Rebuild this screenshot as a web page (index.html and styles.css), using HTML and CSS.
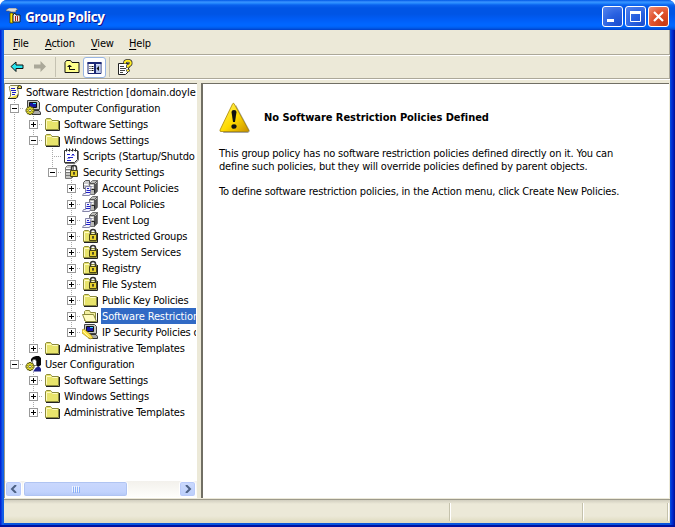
FILE: index.html
```html
<!DOCTYPE html>
<html lang="en">
<head>
<meta charset="utf-8">
<title>Group Policy</title>
<link rel="stylesheet" href="styles.css">
</head>
<body>
<svg class="defs" aria-hidden="true">
  <defs>
    <linearGradient id="gold" x1="0" y1="0" x2="1" y2="1"><stop offset="0" stop-color="#fff36b"/><stop offset=".55" stop-color="#ffda00"/><stop offset="1" stop-color="#c98f00"/></linearGradient>
  </defs>
  <symbol id="folder" viewBox="0 0 16 16">
    <path d="M1.500 13.500V3.500l1-1h4l1 1v1h7v9z" fill="#e8e46c" stroke="#8c8b3c"/>
    <path d="M2.500 12.500v-8h5l1 1h5" fill="none" stroke="#fffbc0"/>
    <path d="M2 14.500h13.500V5" fill="none" stroke="#222"/>
  </symbol>
  <symbol id="open" viewBox="0 0 16 16">
    <path d="M2.500 12.500v-9l1-1h4l1 2h5v9z" fill="#f3efa0" stroke="#8c8b3c"/>
    <path d="M.5 6.500h11l3 7h-11z" fill="#fffbc0" stroke="#8c8b3c"/>
    <path d="M3 14.500h12.500V5" fill="none" stroke="#222"/>
  </symbol>
  <symbol id="padlock" viewBox="0 0 16 16">
    <path d="M8.500 8V4q0-2.500 2.500-2.500T13.500 4v4" fill="none" stroke="#333" stroke-width="1.500"/>
    <path d="M7.500 6.500h7v6h-7z" fill="#e8d32f" stroke="#4b4711"/>
    <path d="M11 8v3M10 9h2" stroke="#222"/>
  </symbol>
  <symbol id="lockfolder" viewBox="0 0 16 16"><use href="#folder"/><use href="#padlock"/></symbol>
  <symbol id="server" viewBox="0 0 16 16">
    <path d="M7.500 3.500l3-3h5v11l-3 3h-5z" fill="#bcbcb8" stroke="#777"/>
    <path d="M7.500 3.500h5v11M12.500 3.500l3-3" fill="none" stroke="#555"/>
    <path d="M13.500 4v9M14.500 3v9" stroke="#555"/>
    <path d="M8.500 5.500h3M8.500 7.500h3" stroke="#fff"/>
    <path d="M3.500 6.500h6l-1 2v5l-1 2h-7l1-2h2z" fill="#f2f2ff" stroke="#8585a8"/>
    <path d="M5 8.500h2M4.500 10.500h4M4 12.500h4" stroke="#2020c8"/><path d="M9.500 9.500h3v3" fill="none" stroke="#222"/>
  </symbol>
  <symbol id="accounts" viewBox="0 0 16 16">
    <path d="M1.500 2.500l2-2h4v8h-6z" fill="#ccc" stroke="#555"/><path d="M2 4.500h4" stroke="#fff"/>
    <use href="#server"/>
  </symbol>
  <symbol id="security" viewBox="0 0 16 16">
    <path d="M2.500 3.500l2-2h6v11l-2 2h-6z" fill="#c8c8c4" stroke="#777"/>
    <path d="M3 5.500h5M3 8.500h5M3 11.500h5M8.500 4v10" stroke="#777"/><path d="M3 4.500h5M3 7.500h5" stroke="#fff"/>
    <use href="#padlock"/>
  </symbol>
  <symbol id="scripts" viewBox="0 0 16 16">
    <path d="M1.500 2.500h13v9l-3 3h-10z" fill="#fff" stroke="#333"/>
    <path d="M2 15.500h10l3.500-3.500V3" fill="none" stroke="#777"/>
    <path d="M3.500.5v3M6.500.5v3M9.500.5v3M12.500.5v3" stroke="#222"/><path d="M4.500 1v2M7.500 1v2M10.500 1v2" stroke="#aaa"/>
    <path d="M4 6.500h3M9 6.500h2M5 9.500h5M4 12.500h4" stroke="#1e1ec8"/><path d="M8 7.500h4M4 10.500h3" stroke="#9a9ae8"/>
  </symbol>
  <symbol id="scroll" viewBox="0 0 16 16">
    <path d="M3.500 1.500h9q-2 1-2 3l1 4q0 4-3 6h-7q3-2 2-6l-1-4q-1-2 1-3z" fill="#fffde2" stroke="#88854c"/>
    <path d="M12.500 1.500q3 0 2 3h-4q0-3 2-3M1 14.500h8q2-1 2-4" fill="#ecd946" stroke="#222"/>
    <path d="M4 4.500h4M4 6.500h5M5 8.500h4M5 10.500h3" stroke="#1e1ec8"/>
  </symbol>
  <symbol id="computer" viewBox="0 0 16 16">
    <path d="M2.500.5h10l2 2v7h-12z" fill="#c8c8c4" stroke="#444"/>
    <path d="M4.500 2.500h7v5h-7z" fill="#1717a6" stroke="#111"/><path d="M8 3.500h3" stroke="#3fd8ff"/>
    <path d="M6 10.500h8l1.500 2v2H7z" fill="#aaa" stroke="#333"/>
  </symbol>
  <symbol id="gear" viewBox="0 0 16 16">
    <path d="M5 6v9M.500 10.500h9M2 7.500l6 6M8 7.500l-6 6" stroke="#5e5a10" stroke-width="2.600"/>
    <path d="M5 7v7M1.500 10.500h7M2.500 8l5 5M7.500 8l-5 5" stroke="#e5dd32" stroke-width="1.700"/>
    <circle cx="5" cy="10.500" r="1.300" fill="#fff" stroke="#4c480d" stroke-width=".7"/>
  </symbol>
  <symbol id="compconf" viewBox="0 0 16 16"><use href="#computer"/><use href="#gear"/></symbol>
  <symbol id="ipsec" viewBox="0 0 16 16"><use href="#computer"/><path d="M0 6l2-1 7 6 2 3-3 1-8-6z" fill="#ffe34a" stroke="#a48b15" stroke-width=".7"/><path d="M1 7l6 6" stroke="#fff7a0"/></symbol>
  <symbol id="userconf" viewBox="0 0 16 16">
    <path d="M6 6V3l2-2 3-1h3l2 2v7l-3 2-2-2V5L9 3z" fill="#080808"/>
    <path d="M8 3.500h2.500l1 2v4H8.500l-1-3z" fill="#fff" stroke="#444" stroke-width=".7"/>
    <path d="M8 15.500l3-4 3-1 2 2v3z" fill="#1d208c"/><use href="#gear"/>
  </symbol>
</svg>

<div class="window">
  <header class="titlebar">
    <svg class="appicon" viewBox="0 0 16 16"><path d="M0 2l3-2h7l2 2h-2v2H5L3 3H0z" fill="#ddd" stroke="#555" stroke-width=".6"/><path d="M4 5h3v10H4z" fill="#ffe400" stroke="#4a4300" stroke-width=".8"/><path d="M7 14V7l2-2 1 2h4v7z" fill="#eee" stroke="#222"/><path d="M9.500 8v5M11.500 8v5" stroke="#b01818"/></svg>
    <h1 class="title">Group Policy</h1>
    <div class="controls">
      <span class="ctl"><svg viewBox="0 0 19 19"><path d="M4 12h7v3H4z" fill="#fff"/></svg></span>
      <span class="ctl"><svg viewBox="0 0 19 19"><path d="M4.500 5.500h10v9h-10z" fill="none" stroke="#fff"/><path d="M4 5.500h11" stroke="#fff" stroke-width="3"/></svg></span>
      <span class="ctl close"><svg viewBox="0 0 19 19"><path d="M5 5l9 9M14 5l-9 9" stroke="#fff" stroke-width="2.200"/></svg></span>
    </div>
  </header>
  <nav class="menubar"><span class="m-file"><u>F</u>ile</span><span class="m-action"><u>A</u>ction</span><span class="m-view"><u>V</u>iew</span><span class="m-help"><u>H</u>elp</span></nav>
  <div class="toolbar">
    <svg class="back" viewBox="0 0 14 12"><path d="M1 5.500L6 1v3h7v3.500H6v3z" fill="#27e5ee" stroke="#111"/></svg>
    <svg class="fwd" viewBox="0 0 14 12"><path d="M13 5.500L7.500 0v3.500H1v4h6.500V11z" fill="#aaa899"/></svg>
    <i class="sep"></i>
    <svg class="up" viewBox="0 0 16 14"><path d="M1 12.500V2.500l1.500-2h4l1.500 2h7v10z" fill="#ffff8c" stroke="#111"/><path d="M5.500 5v4.500H11M3.500 6.500h4M4.500 5.500h2" fill="none" stroke="#111"/></svg>
    <span class="toggle"><svg viewBox="0 0 14 12"><path d="M.5.500h13v11H.500z" fill="#fff" stroke="#1b2875"/><path d="M0 1h14M7.500 1v10" stroke="#1b2875" stroke-width="2"/><path d="M8.500 2.500H13v8.500H8.500z" fill="#b9c8ed"/><path d="M2 4.500h1M4 4.500h2M2 6.500h1M4 6.500h2M2 8.500h1M4 8.500h2" stroke="#111"/><path d="M11.500 4v5L9 6.500z" fill="#111"/></svg></span>
    <i class="sep"></i>
    <svg class="prop" viewBox="0 0 16 16"><path d="M1.500 4.500h10v8l-3 3h-7z" fill="#fff" stroke="#222"/><path d="M3 7.500h4M3 9.500h6M3 11.500h5M3 13.500h3" stroke="#444"/><path d="M8 5V3.500Q8 1.800 11 1.800t2.700 2.500q0 1.700-2.700 2.700v2M11 10.500v2" fill="none" stroke="#333" stroke-width="3.600"/><path d="M8 4.500v-1Q8 1.800 11 1.800t2.700 2.500q0 1.700-2.700 2.700v1.500M11 10.800v1.400" fill="none" stroke="#ffec24" stroke-width="2"/></svg>
  </div>

  <main class="panes">
    <section class="treepane">
      <div class="tree">
        <div class="row"><svg class="ico root"><use href="#scroll"/></svg><span class="rootname">Software Restriction [domain.doyle</span></div>
        <div class="row"><i class="g t"><b class="minus"></b></i><svg class="ico"><use href="#compconf"/></svg><span>Computer Configuration</span></div>
        <div class="row"><i class="g v"></i><i class="g t"><b class="plus"></b></i><svg class="ico"><use href="#folder"/></svg><span>Software Settings</span></div>
        <div class="row"><i class="g v"></i><i class="g t"><b class="minus"></b></i><svg class="ico"><use href="#folder"/></svg><span>Windows Settings</span></div>
        <div class="row"><i class="g v"></i><i class="g v"></i><i class="g t"></i><svg class="ico"><use href="#scripts"/></svg><span>Scripts (Startup/Shutdo</span></div>
        <div class="row"><i class="g v"></i><i class="g v"></i><i class="g l"><b class="minus"></b></i><svg class="ico"><use href="#security"/></svg><span>Security Settings</span></div>
        <div class="row"><i class="g v"></i><i class="g v"></i><i class="g"></i><i class="g t"><b class="plus"></b></i><svg class="ico"><use href="#accounts"/></svg><span>Account Policies</span></div>
        <div class="row"><i class="g v"></i><i class="g v"></i><i class="g"></i><i class="g t"><b class="plus"></b></i><svg class="ico"><use href="#server"/></svg><span>Local Policies</span></div>
        <div class="row"><i class="g v"></i><i class="g v"></i><i class="g"></i><i class="g t"><b class="plus"></b></i><svg class="ico"><use href="#server"/></svg><span>Event Log</span></div>
        <div class="row"><i class="g v"></i><i class="g v"></i><i class="g"></i><i class="g t"><b class="plus"></b></i><svg class="ico"><use href="#lockfolder"/></svg><span>Restricted Groups</span></div>
        <div class="row"><i class="g v"></i><i class="g v"></i><i class="g"></i><i class="g t"><b class="plus"></b></i><svg class="ico"><use href="#lockfolder"/></svg><span>System Services</span></div>
        <div class="row"><i class="g v"></i><i class="g v"></i><i class="g"></i><i class="g t"><b class="plus"></b></i><svg class="ico"><use href="#lockfolder"/></svg><span>Registry</span></div>
        <div class="row"><i class="g v"></i><i class="g v"></i><i class="g"></i><i class="g t"><b class="plus"></b></i><svg class="ico"><use href="#lockfolder"/></svg><span>File System</span></div>
        <div class="row"><i class="g v"></i><i class="g v"></i><i class="g"></i><i class="g t"><b class="plus"></b></i><svg class="ico"><use href="#folder"/></svg><span>Public Key Policies</span></div>
        <div class="row"><i class="g v"></i><i class="g v"></i><i class="g"></i><i class="g t"><b class="plus"></b></i><svg class="ico"><use href="#open"/></svg><span class="selected">Software Restriction</span></div>
        <div class="row"><i class="g v"></i><i class="g v"></i><i class="g"></i><i class="g l"><b class="plus"></b></i><svg class="ico"><use href="#ipsec"/></svg><span>IP Security Policies o</span></div>
        <div class="row"><i class="g v"></i><i class="g l"><b class="plus"></b></i><svg class="ico"><use href="#folder"/></svg><span>Administrative Templates</span></div>
        <div class="row"><i class="g l"><b class="minus"></b></i><svg class="ico"><use href="#userconf"/></svg><span>User Configuration</span></div>
        <div class="row"><i class="g"></i><i class="g t"><b class="plus"></b></i><svg class="ico"><use href="#folder"/></svg><span>Software Settings</span></div>
        <div class="row"><i class="g"></i><i class="g t"><b class="plus"></b></i><svg class="ico"><use href="#folder"/></svg><span>Windows Settings</span></div>
        <div class="row"><i class="g"></i><i class="g l"><b class="plus"></b></i><svg class="ico"><use href="#folder"/></svg><span>Administrative Templates</span></div>
      </div>
      <div class="scrollbar">
        <span class="arrow"><svg viewBox="0 0 8 8"><path d="M6 0L2 4l4 4" fill="none" stroke="#4d6185" stroke-width="2"/></svg></span>
        <span class="thumb"><i></i><i></i><i></i><i></i></span>
        <span class="arrow end"><svg viewBox="0 0 8 8"><path d="M2 0l4 4-4 4" fill="none" stroke="#4d6185" stroke-width="2"/></svg></span>
      </div>
    </section>
    <section class="content">
      <div class="heading">
        <svg class="warn" viewBox="0 0 32 32"><path d="M17 3l14 26-2 2H4z" fill="#777" opacity=".65"/><path d="M15 1.500L29.500 28q.5 1.500-1 1.500H2q-1.500 0-1-1.500L13.500 2q.7-1.300 1.500-.5z" fill="url(#gold)" stroke="#a98700" stroke-width=".8"/><path d="M12.500 10q0-2 2.500-2t2.500 2L16 20h-2z" fill="#111"/><ellipse cx="15" cy="24.500" rx="2.600" ry="2.300" fill="#111"/></svg>
        <h2>No Software Restriction Policies Defined</h2>
      </div>
      <p>This group policy has no software restriction policies defined directly on it. You can<br>define such policies, but they will override policies defined by parent objects.</p>
      <p>To define software restriction policies, in the Action menu, click Create New Policies.</p>
    </section>
  </main>
  <footer class="status"><span></span><span></span><span></span></footer>
</div>
</body>
</html>
```
FILE: styles.css
```css
* { box-sizing: border-box; }
html { background: #fff; }
body { margin: 0; font: 11px/16px "DejaVu Sans Condensed", "DejaVu Sans", sans-serif; color: #000; overflow: hidden; }
svg { display: block; }
.defs { position: absolute; width: 0; height: 0; }
.window { width: 675px; height: 527px; display: flex; flex-direction: column; padding: 0 5px 4px 4px; overflow: hidden; border-radius: 7px 7px 0 0;
  background: linear-gradient(90deg, #0019cf 0, #0831d9 1px, #166aee 3px, #0855dd 4px, #0855dd 670px, #0040dc 671px, #0024c7 673px, #00138c 675px); box-shadow: inset 0 -2px #0013a0; }
.titlebar { height: 30px; flex: none; margin: 0 -5px 0 -4px; padding: 0 6px 0 6px; display: flex; align-items: center;
  background: linear-gradient(#0058e6 0, #3a93ff 2px, #288eff 3px, #0a62ee 5px, #0055e5 8px, #0055e5 14px, #005cf5 19px, #0066ff 24px, #0066ff 26px, #005bea 28px, #003fc8 30px); }
.appicon { width: 16px; height: 16px; margin-top: 1px; }
.title { margin: 4px 0 0 3px; font: bold 13.5px/16px "Open Sans", sans-serif; color: #fff; text-shadow: 1px 1px #0f1089; letter-spacing: -.45px; }
.controls { display: flex; gap: 2px; margin: 2px 0 0 auto; }
.ctl { width: 21px; height: 21px; border: 1px solid #fff; border-radius: 3px; background: radial-gradient(circle at 85% 90%, #1c4fd0 0, #2860e0 45%, #5585ee 100%); }
.close { background: radial-gradient(circle at 80% 90%, #c93a12 0, #e1542f 55%, #ef9178 100%); }
.menubar { height: 25px; flex: none; display: flex; align-items: center; background: #ece9d8; border-bottom: 1px solid #aca899; padding: 3px 0 0 9px; box-shadow: inset -1px 0 #aca899; letter-spacing: -.2px; }
.menubar u { text-underline-offset: 2px; text-decoration-thickness: 1px; text-decoration-skip-ink: none; }
.menubar span { flex: none; }
.m-file { width: 32px; } .m-action { width: 46px; } .m-view { width: 38px; }
.toolbar { height: 24px; flex: none; display: flex; align-items: center; background: #ece9d8; border-top: 1px solid #fff; border-bottom: 1px solid #aca899; padding-left: 6px; box-shadow: inset -1px 0 #aca899; }
.back { width: 14px; height: 12px; }
.fwd { width: 14px; height: 12px; margin-left: 9px; }
.sep { width: 1px; height: 20px; background: #c5c2b2; margin-left: 8px; }
.up { width: 16px; height: 14px; margin-left: 8px; }
.toggle { width: 23px; height: 21px; border: 1px solid #98b5e2; border-radius: 3px; background: #fff; padding: 4px 3px; margin-left: 3px; }
.toggle svg { width: 15px; height: 12px; }
.toggle + .sep { margin-left: 3px; }
.prop { width: 16px; height: 16px; margin-left: 7px; }
.panes { flex: 1; min-height: 0; display: flex; background: #ece9d8; padding: 3px 1px 1px 1px; border-top: 1px solid #fff; }
.treepane { width: 192px; flex: none; display: flex; flex-direction: column; border-top: 1px solid #716f64; background: #fff; box-shadow: -1px 0 #9d9a8b; }
.tree { flex: 1; min-height: 0; overflow: hidden; margin-right: 1px; }
.row { height: 16px; display: flex; white-space: nowrap; overflow: hidden; }
.row > span { padding-left: 2px; letter-spacing: -.19px; line-height: 17px; }
.row > .rootname { letter-spacing: -.12px; }
.ico { width: 16px; height: 16px; margin: 0 2px 0 1px; flex: none; }
.root { margin: 0 1px 0 2px; }
.g { width: 19px; height: 16px; flex: none; display: flex; align-items: center; justify-content: center; background-repeat: no-repeat; }
.v, .t, .l { background-image: repeating-linear-gradient(#aaa 0 1px, transparent 1px 2px); background-size: 1px 16px; background-position: 9px 0; }
.t, .l { background-image: repeating-linear-gradient(#aaa 0 1px, transparent 1px 2px), repeating-linear-gradient(90deg, #aaa 0 1px, transparent 1px 2px); background-size: 1px 16px, 10px 1px; background-position: 9px 0, 9px 8px; }
.l { background-size: 1px 8px, 10px 1px; }
.plus, .minus { width: 9px; height: 9px; margin-top: 1px; border: 1px solid #999; background: linear-gradient(#000, #000) center / 5px 1px no-repeat #fff; }
.plus { background: linear-gradient(#000, #000) center / 5px 1px no-repeat, linear-gradient(#000, #000) center / 1px 5px no-repeat #fff; }
.row > .selected { background: #316ac5; color: #fff; margin-left: 1px; padding-left: 1px; flex: 1; letter-spacing: -.12px; }
.scrollbar { height: 16px; flex: none; display: flex; background: linear-gradient(#f3f1ec, #fefefb); margin-bottom: 1px; }
.arrow { width: 17px; height: 16px; border: 1px solid #fff; border-radius: 3px; background: linear-gradient(#cbd9fd, #bccffb); display: flex; align-items: center; justify-content: center; box-shadow: inset 0 0 0 1px #b9cafa; }
.arrow svg { width: 8px; height: 8px; }
.end { margin: 0 1px 0 auto; }
.thumb { width: 105px; margin-left: 1px; border: 1px solid #fff; border-radius: 3px; background: linear-gradient(#cad8fd, #c2d3fd 70%, #b4c8f6); display: flex; align-items: center; justify-content: center; gap: 1px; box-shadow: inset 0 0 0 1px #b0c4f2; }
.thumb i { width: 1px; height: 6px; background: #eef4fe; box-shadow: 1px 1px #8cb0f8; }
.content { flex: 1; margin-left: 4px; background: #fff; border: solid #716f64; border-width: 1px 0 0 2px; padding: 17px 0 0 16px; white-space: nowrap; }
.heading { display: flex; align-items: center; height: 34px; }
.warn { width: 32px; height: 32px; }
h2 { margin: 0 0 0 13px; font: bold 11px/14px "DejaVu Sans Condensed", sans-serif; letter-spacing: -.04px; }
p { margin: 12px 0 0; line-height: 13px; letter-spacing: -.18px; }
.status { height: 24px; flex: none; display: flex; border-top: 1px solid #9d9a8b; padding: 3px 2px 2px 0; background: linear-gradient(#d1cebf 0, #ece9d8 4px, #ece9d8 16px, #dfdbc0 22px); }
.status span { width: 133px; border-right: 1px solid #c5c2ac; box-shadow: 1px 0 #fff; }
.status span:first-child { flex: 1; }
.status span:last-child { width: 85px; }
```
